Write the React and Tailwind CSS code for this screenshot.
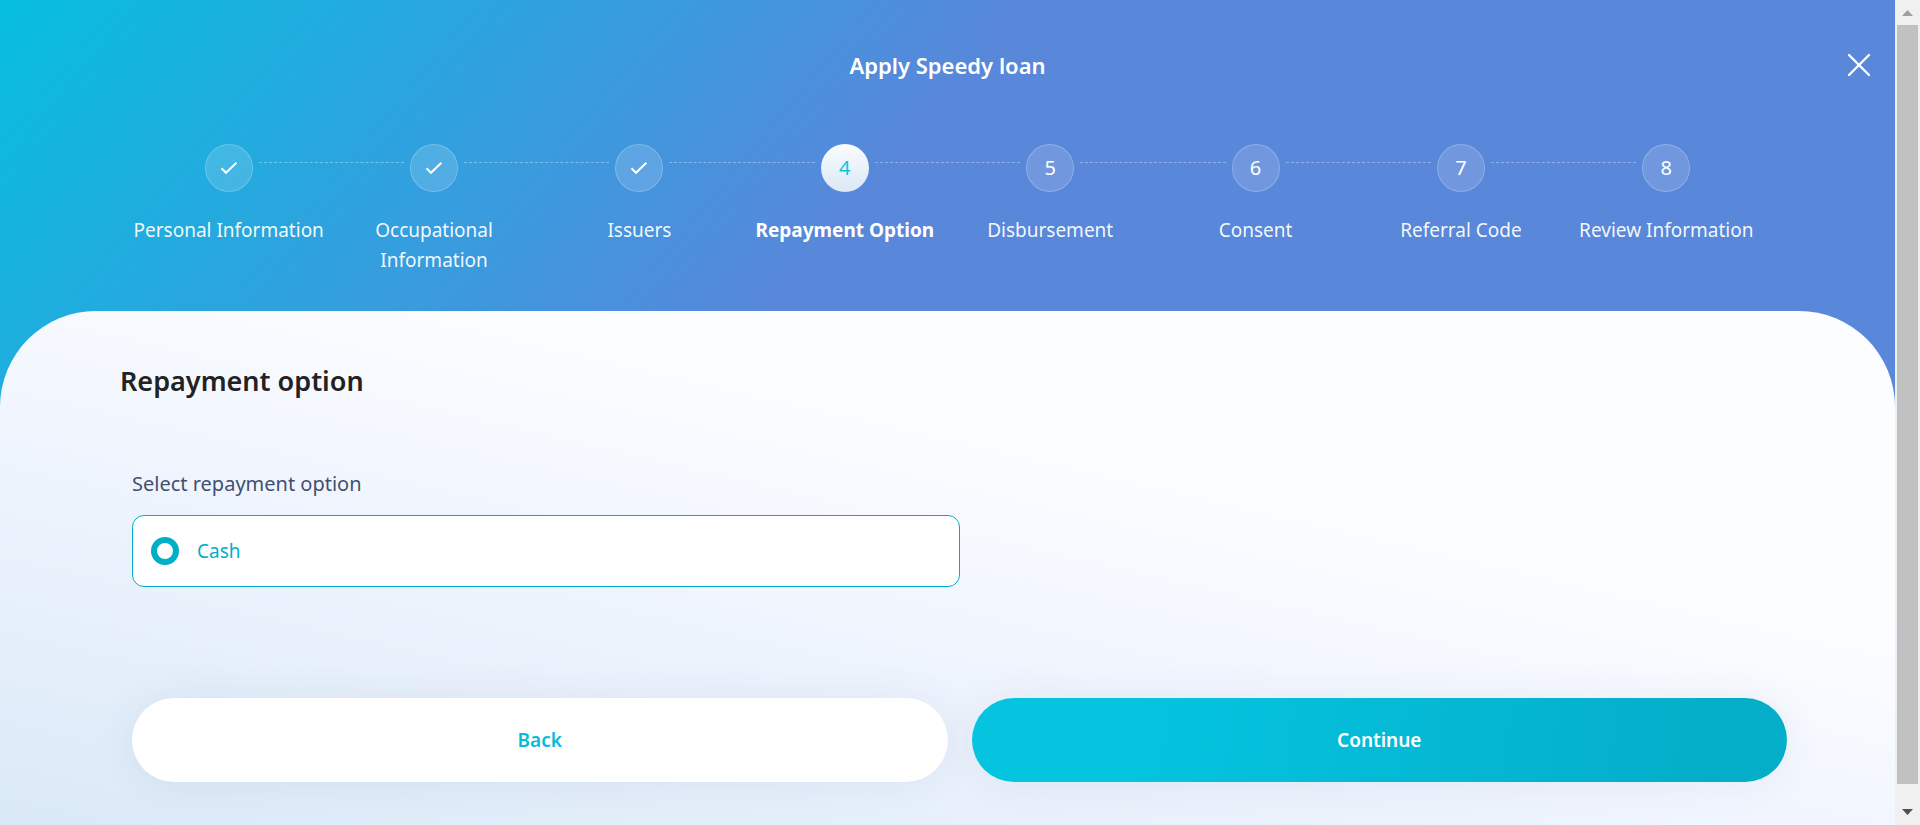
import React from "react";

const steps = [
  { label: "Personal Information", state: "done" },
  { label: "Occupational Information", state: "done" },
  { label: "Issuers", state: "done" },
  { label: "Repayment Option", state: "current" },
  { label: "Disbursement", state: "todo" },
  { label: "Consent", state: "todo" },
  { label: "Referral Code", state: "todo" },
  { label: "Review Information", state: "todo" },
];

function CheckIcon() {
  return (
    <svg width="18" height="14" viewBox="0 0 18 14" fill="none" stroke="white" strokeWidth="2" aria-hidden="true">
      <path d="M1.5 7.2 L6 11.8 L16.4 1.8" />
    </svg>
  );
}

function StepCircle({ number, state }) {
  if (state === "current") {
    return (
      <span className="flex size-12 items-center justify-center rounded-full bg-linear-to-b from-[#fafcff] to-[#dae8f5] text-xl text-[#0cc4e0]">
        {number}
      </span>
    );
  }
  return (
    <span className="flex size-12 items-center justify-center rounded-full border border-white/20 bg-white/15 text-xl text-white">
      {state === "done" ? <CheckIcon /> : number}
    </span>
  );
}

function Stepper() {
  return (
    <ol className="grid grid-cols-8 px-[126px] pt-[62px]">
      {steps.map((step, i) => (
        <li key={step.label} className="relative flex flex-col items-center gap-[23px]">
          <StepCircle number={i + 1} state={step.state} />
          {i < steps.length - 1 && (
            <span className="absolute top-[18px] left-[calc(50%+30px)] w-[calc(100%-60px)] border-t border-dashed border-white/35" />
          )}
          <span
            className={
              step.state === "current"
                ? "px-1 text-center text-[19px]/[30px] font-bold text-white"
                : "px-1 text-center text-[19px]/[30px] text-white/95"
            }
          >
            {step.label}
          </span>
        </li>
      ))}
    </ol>
  );
}

function ScrollBar() {
  return (
    <div className="flex w-[25px] shrink-0 flex-col items-center bg-[#f0f0f0]" aria-hidden="true">
      <div className="flex h-[25px] items-center">
        <svg width="11" height="6" viewBox="0 0 11 6" fill="#a0a0a0">
          <path d="M0 6 L5.5 0 L11 6 Z" />
        </svg>
      </div>
      <div className="w-[21px] flex-1 bg-[#c1c1c1]" />
      <div className="flex h-[41px] items-end pb-[10px]">
        <svg width="11" height="6" viewBox="0 0 11 6" fill="#505050">
          <path d="M0 0 L5.5 6 L11 0 Z" />
        </svg>
      </div>
    </div>
  );
}

export default function App() {
  return (
    <div className="flex min-h-screen font-['Noto_Sans',sans-serif]">
      <div className="flex min-w-0 flex-1 flex-col bg-[linear-gradient(130deg,#06bedf_0%,#3e98de_28%,#5987da_40%)]">
        <header className="pb-9">
          <div className="flex items-center px-6 pt-12">
            <span className="w-6" />
            <h1 className="flex-1 text-center text-[22px]/[34px] font-semibold text-white">Apply Speedy loan</h1>
            <button type="button" aria-label="Close" className="flex size-6 items-center justify-center">
              <svg width="24" height="24" viewBox="0 0 24 24" fill="none" stroke="white" strokeWidth="2.4" strokeLinecap="round">
                <path d="M2 2 L22 22 M22 2 L2 22" />
              </svg>
            </button>
          </div>
          <Stepper />
        </header>

        <main className="flex-1 rounded-t-[96px] bg-[linear-gradient(13deg,#dae9f7_0%,#f0f5fe_42%,#fcfdff_67%)] pt-12 pr-24 pb-10 pl-[120px]">
          <h2 className="text-[27px]/[44px] font-semibold text-[#222]">Repayment option</h2>
          <form onSubmit={(e) => e.preventDefault()}>
            <fieldset className="w-1/2 pt-[66px] pl-3">
              <legend className="float-left mb-4 text-xl/[30px] text-[#42506f]">Select repayment option</legend>
              <label className="clear-both flex h-[72px] w-full items-center gap-[18px] rounded-xl border border-[#00aec7] bg-white px-[18px] text-[19px] text-[#00aec7]">
                <input
                  type="radio"
                  name="repayment"
                  defaultChecked
                  className="size-7 appearance-none rounded-full border-6 border-[#00aec7] bg-white"
                />
                Cash
              </label>
            </fieldset>
            <div className="mt-[111px] grid grid-cols-2 gap-6 px-3">
              <button
                type="button"
                className="h-[84px] rounded-full bg-white text-[19px] font-semibold text-[#05bcd8] shadow-[0_2px_40px_rgba(60,80,130,0.08)]"
              >
                Back
              </button>
              <button
                type="submit"
                className="h-[84px] rounded-full bg-[linear-gradient(98deg,#04c4e0_20%,#04aec9_90%)] text-[19px] font-semibold text-white shadow-[0_2px_40px_rgba(60,80,130,0.08)]"
              >
                Continue
              </button>
            </div>
          </form>
        </main>
      </div>
      <ScrollBar />
    </div>
  );
}
